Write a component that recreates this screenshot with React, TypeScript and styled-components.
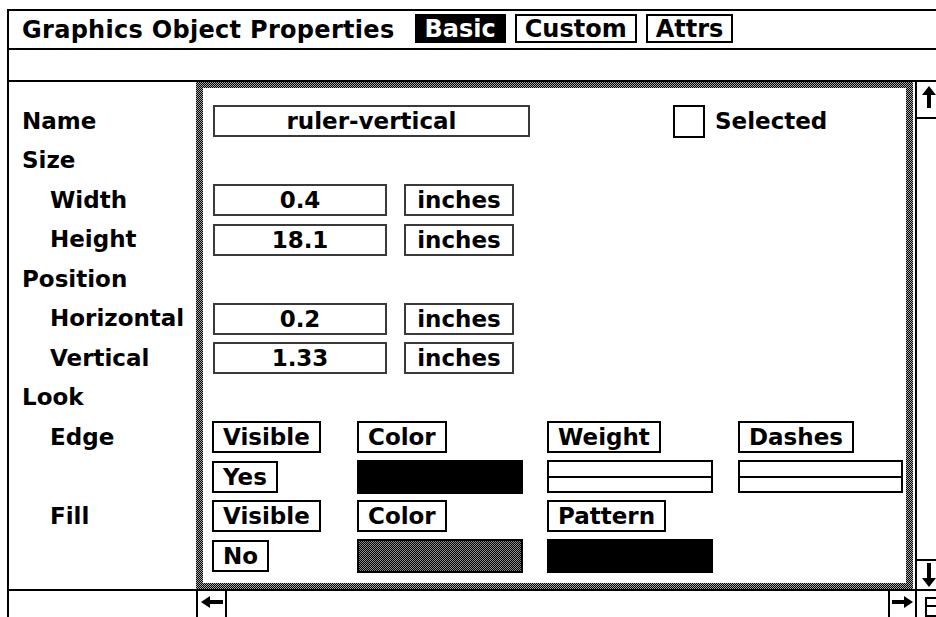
import { createGlobalStyle, styled } from "styled-components";

const ROW = 39.5;
const dither = `repeating-conic-gradient(#000 0 25%, #a8a8a8 0 50%) 0 0 / 2px 2px`;
const darkDither = `repeating-conic-gradient(#000 0 25%, #8a8a8a 0 50%) 0 0 / 2px 2px`;

const GlobalStyle = createGlobalStyle`
  html, body {
    margin: 0;
    padding: 0;
    background: #fff;
  }
  body {
    font-family: "DejaVu Sans", Verdana, sans-serif;
    font-weight: bold;
    color: #000;
    overflow: hidden;
  }
  * {
    box-sizing: border-box;
  }
`;

const labels: { text: string; indent?: boolean }[] = [
  { text: "Name" },
  { text: "Size" },
  { text: "Width", indent: true },
  { text: "Height", indent: true },
  { text: "Position" },
  { text: "Horizontal", indent: true },
  { text: "Vertical", indent: true },
  { text: "Look" },
  { text: "Edge", indent: true },
  { text: "" },
  { text: "Fill", indent: true },
];

const measures = [
  { value: "0.4" },
  { value: "18.1" },
  null,
  { value: "0.2" },
  { value: "1.33" },
];

const App = () => {
  return (
    <>
      <GlobalStyle />
      <Frame>
        <TitleBar>
          <Title>Graphics Object Properties</Title>
          <Tab $active>Basic</Tab>
          <Tab>Custom</Tab>
          <Tab>Attrs</Tab>
        </TitleBar>
        <MessageBar />
        <Body>
          <LabelColumn>
            {labels.map((l, i) => (
              <Label key={i} $indent={l.indent}>
                {l.text}
              </Label>
            ))}
          </LabelColumn>

          <Panel>
            <PanelInner>
              <Row>
                <Field $width={317}>ruler-vertical</Field>
                <CheckBox />
                <CheckLabel>Selected</CheckLabel>
              </Row>
              <Row />
              {measures.map((m, i) =>
                m ? (
                  <Row key={i}>
                    <Field $width={174}>{m.value}</Field>
                    <Unit>inches</Unit>
                  </Row>
                ) : (
                  <Row key={i} />
                )
              )}
              <Row />
              <LookGrid>
                <Button>Visible</Button>
                <Button>Color</Button>
                <Button>Weight</Button>
                <Button>Dashes</Button>

                <Button>Yes</Button>
                <Swatch $fill="#000" />
                <LineField $width={166}>
                  <LineSlot />
                  <LineSlot />
                </LineField>
                <LineField $width={165}>
                  <LineSlot />
                  <LineSlot />
                </LineField>

                <Button>Visible</Button>
                <Button>Color</Button>
                <Button>Pattern</Button>
                <span />

                <Button>No</Button>
                <Swatch $fill={darkDither} />
                <Swatch $fill="#000" />
                <span />
              </LookGrid>
            </PanelInner>
          </Panel>

          <ScrollColumn>
            <ScrollUp>
              <svg width="16" height="22" viewBox="0 0 16 22">
                <polygon points="8,0 15,9 10,9 10,22 6,22 6,9 1,9" fill="#000" />
              </svg>
            </ScrollUp>
            <ScrollDown>
              <svg width="16" height="24" viewBox="0 0 16 24">
                <polygon points="8,24 15,15 10,15 10,0 6,0 6,15 1,15" fill="#000" />
              </svg>
            </ScrollDown>
          </ScrollColumn>
        </Body>

        <BottomBar>
          <BottomLead />
          <ArrowCell $width={31}>
            <svg width="22" height="12" viewBox="0 0 22 12">
              <polygon points="0,6 9,0 9,4 22,4 22,8 9,8 9,12" fill="#000" />
            </svg>
          </ArrowCell>
          <BottomSpacer />
          <ArrowCell $width={29}>
            <svg width="21" height="12" viewBox="0 0 21 12">
              <polygon points="21,6 12,0 12,4 0,4 0,8 12,8 12,12" fill="#000" />
            </svg>
          </ArrowCell>
          <Corner>
            <svg width="19" height="26" viewBox="0 0 19 26">
              <rect x="9" y="7" width="16" height="18" fill="none" stroke="#000" strokeWidth="2" />
              <line x1="9" y1="15" x2="19" y2="15" stroke="#000" strokeWidth="2" />
            </svg>
          </Corner>
        </BottomBar>
      </Frame>
    </>
  );
};

export default App;

const Frame = styled.div`
  margin: 9px 0 0 7px;
  width: 929px;
  height: 608px;
  border-top: 2px solid #000;
  border-left: 2px solid #000;
  display: flex;
  flex-direction: column;
  overflow: hidden;
`;

const TitleBar = styled.div`
  height: 39px;
  flex-shrink: 0;
  border-bottom: 2px solid #000;
  display: flex;
  align-items: center;
  gap: 9px;
  padding-left: 13px;
`;

const Title = styled.div`
  font-size: 24px;
  letter-spacing: 0.3px;
  margin-right: 11px;
  white-space: nowrap;
`;

const Tab = styled.div<{ $active?: boolean }>`
  height: 29px;
  margin-top: -2px;
  padding: 0 8px;
  border: 2px solid #000;
  font-size: 24px;
  display: flex;
  align-items: center;
  background: ${(p) => (p.$active ? "#000" : "#fff")};
  color: ${(p) => (p.$active ? "#fff" : "#000")};
`;

const MessageBar = styled.div`
  height: 32px;
  flex-shrink: 0;
  border-bottom: 2px solid #000;
`;

const Body = styled.div`
  height: 507px;
  flex-shrink: 0;
  display: flex;
`;

const LabelColumn = styled.div`
  width: 187px;
  flex-shrink: 0;
  padding: 19.6px 0 0 13px;
`;

const Label = styled.div<{ $indent?: boolean }>`
  height: ${ROW}px;
  line-height: ${ROW}px;
  font-size: 23px;
  white-space: nowrap;
  padding-left: ${(p) => (p.$indent ? "28px" : "0")};
`;

const Panel = styled.div`
  width: 717px;
  flex-shrink: 0;
  padding: 6px 7px;
  background: ${dither};
`;

const PanelInner = styled.div`
  height: 100%;
  background: #fff;
  padding: 13.6px 0 0 9px;
  display: flex;
  flex-direction: column;
`;

const Row = styled.div`
  height: ${ROW}px;
  flex-shrink: 0;
  display: flex;
  align-items: center;
`;

const Field = styled.div<{ $width: number }>`
  width: ${(p) => p.$width}px;
  height: 32px;
  margin-left: 1px;
  border: 2px solid #3a3a3a;
  font-size: 23px;
  display: flex;
  align-items: center;
  justify-content: center;
  white-space: nowrap;
`;

const Unit = styled(Field).attrs({ $width: 110 })`
  margin-left: 17px;
`;

const CheckBox = styled.div`
  width: 32px;
  height: 33px;
  margin-left: 143px;
  border: 2px solid #000;
`;

const CheckLabel = styled.div`
  margin-left: 10px;
  font-size: 23px;
`;

const LookGrid = styled.div`
  display: grid;
  grid-template-columns: 145px 190px 191px 1fr;
  grid-auto-rows: ${ROW}px;
  align-items: center;
  justify-items: start;
`;

const Button = styled.div`
  height: 32px;
  padding: 0 9px;
  border: 2px solid #000;
  font-size: 23px;
  display: flex;
  align-items: center;
  white-space: nowrap;
`;

const Swatch = styled.div<{ $fill: string }>`
  width: 166px;
  height: 34px;
  border: 2px solid #000;
  background: ${(p) => p.$fill};
`;

const LineField = styled.div<{ $width: number }>`
  width: ${(p) => p.$width}px;
  height: 33px;
  border: 2px solid #000;
  display: flex;
  flex-direction: column;
`;

const LineSlot = styled.div`
  flex: 1;
  &:first-child {
    border-bottom: 2px solid #000;
  }
`;

const ScrollColumn = styled.div`
  flex: 1;
  margin-left: 2px;
  border-left: 2px solid #000;
  display: flex;
  flex-direction: column;
  justify-content: space-between;
`;

const ScrollUp = styled.div`
  height: 37px;
  border-bottom: 2px solid #000;
  padding: 4px 0 0 4px;
`;

const ScrollDown = styled.div`
  height: 30px;
  border-top: 2px solid #000;
  padding: 2px 0 0 4px;
`;

const BottomBar = styled.div`
  height: 28px;
  flex-shrink: 0;
  border-top: 2px solid #000;
  display: flex;
`;

const BottomLead = styled.div`
  width: 187px;
  flex-shrink: 0;
`;

const ArrowCell = styled.div<{ $width: number }>`
  width: ${(p) => p.$width}px;
  flex-shrink: 0;
  border-left: 2px solid #000;
  border-right: 2px solid #000;
  display: flex;
  align-items: center;
  justify-content: center;
  padding-bottom: 4px;
`;

const BottomSpacer = styled.div`
  flex: 1;
`;

const Corner = styled.div`
  width: 19px;
  flex-shrink: 0;
  overflow: hidden;
  svg {
    display: block;
  }
`;
